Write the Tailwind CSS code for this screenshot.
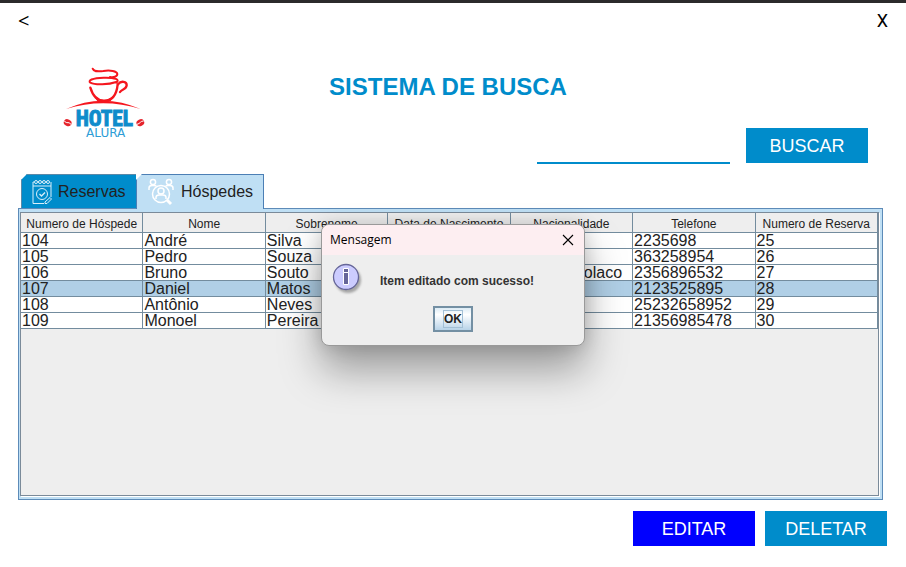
<!DOCTYPE html>
<html lang="pt-BR">
<head>
<meta charset="utf-8">
<meta name="viewport" content="width=device-width, initial-scale=1">
<title>Sistema de Busca - Hotel Alura</title>
<script src="https://cdn.jsdelivr.net/npm/@tailwindcss/browser@4"></script>
</head>
<body class="min-h-screen flex flex-col bg-white border-t-3 border-[#2b2a2b] font-['Liberation_Sans',Arial,sans-serif] text-[#222]">
  <header class="flex justify-between px-4 pt-2 text-lg leading-5 text-black">
    <button type="button" aria-label="Voltar" class="px-0.5 font-['Open_Sans','Noto_Sans',sans-serif] text-xl leading-5">&lt;</button>
    <button type="button" aria-label="Fechar" class="px-0.5 font-['Roboto',sans-serif]">X</button>
  </header>

  <section class="flex flex-col h-[143px] pl-[50px] pr-[38px] pt-6">
    <div class="grid grid-cols-[1fr_auto_1fr]">
      <svg class="w-[110px] h-[95px]" viewBox="0 0 330 285" role="img" aria-label="Hotel Alura">
        <g fill="none" stroke="#f5161e" stroke-linecap="round">
          <path d="M128 41C132 52 145 49 160 48C180 45 201 48 202 57C202 65 190 68 180 66" stroke-width="6"/>
          <path d="M199 83C211 74 196 67 161 68C126 69 113 77 121 83C136 91 176 89 199 81" stroke-width="6"/>
          <path d="M121 98C127 118 137 137 162 138C188 137 200 119 203 88" stroke-width="7"/>
          <path d="M204 88C213 76 231 79 230 91C228 105 216 101 210 111" stroke-width="7"/>
        </g>
        <path d="M132 122Q162 146 190 122L182 139H142Z" fill="#f5161e"/>
        <path d="M48 162Q158 112 272 162Q159 127 48 162Z" fill="#f5161e"/>
        <g fill="#e5242c">
          <ellipse cx="53" cy="203" rx="12" ry="10" transform="rotate(25 53 203)"/>
          <ellipse cx="271" cy="203" rx="12" ry="10" transform="rotate(-25 271 203)"/>
        </g>
        <path d="M43 199Q52 205 54 203T63 208M261 208Q268 206 271 202T281 198" fill="none" stroke="#fff" stroke-width="3"/>
        <text x="163" y="212" text-anchor="middle" font-family="'Liberation Sans Narrow','Roboto Condensed','Liberation Sans',sans-serif" font-weight="700" font-size="64" fill="#0e8ccb" stroke="#0e8ccb" stroke-width="3">HOTEL</text>
        <text x="167" y="247" text-anchor="middle" font-family="'DejaVu Sans',sans-serif" font-size="36" fill="#2d9dd6">ALURA</text>
      </svg>
      <h1 class="-ml-[22px] pt-4 text-2xl leading-8 font-bold text-[#008ccb]">SISTEMA DE BUSCA</h1>
    </div>
    <form class="-mt-[22px] flex justify-end gap-4">
      <input type="text" aria-label="Buscar" class="w-[193px] h-9 border-b-2 border-[#008ccb] outline-none">
      <button type="button" class="w-[122px] h-[35px] bg-[#008ccb] text-lg text-white">BUSCAR</button>
    </form>
  </section>

  <main class="flex-1 flex flex-col ml-[18px] mr-[23px]">
    <div role="tablist" class="flex pl-[3px] -mb-px relative">
      <button type="button" role="tab" aria-selected="false" class="flex items-center gap-1 h-[34px] w-[115px] pl-2 bg-[#008ccb] border-t border-l border-[#5b89a8] [clip-path:polygon(6px_0,100%_0,100%_100%,0_100%,0_6px)]">
        <svg class="w-6 h-[26px]" viewBox="0 0 24 26" fill="none" stroke="#d9effa" stroke-width="1">
          <path d="M4 3H3V24.500H14M21 3V18M3 7H21"/>
          <g><circle cx="6" cy="3" r="1.500"/><circle cx="10" cy="3" r="1.500"/><circle cx="14" cy="3" r="1.500"/><circle cx="18" cy="3" r="1.500"/><path d="M8 3h1M12 3h1M16 3h1"/></g>
          <circle cx="12" cy="15" r="5.500"/>
          <path d="M9.500 15L11.500 17L15 13.500" stroke-width="1.300"/><path d="M15 23L20 18.500L21.500 20L17 24.500H15Z"/>
        </svg>
        <span>Reservas</span>
      </button>
      <button type="button" role="tab" aria-selected="true" class="flex items-center gap-1 h-[35px] w-[128px] pl-2.5 bg-[#bfdff4] border-t border-x border-[#4c7fb5] [clip-path:polygon(6px_0,100%_0,100%_100%,0_100%,0_6px)]">
        <svg class="w-[30px] h-[30px] shrink-0" viewBox="0 0 30 30" fill="none" stroke="#fff" stroke-width="1.500">
          <circle cx="6" cy="5" r="2.600"/><path d="M2 13V11Q2 8.500 5 8.500H7Q9 8.500 9.500 9.500"/>
          <circle cx="22" cy="5" r="2.600"/><path d="M26 13V11Q26 8.500 23 8.500H21Q19 8.500 18.500 9.500"/>
          <circle cx="14" cy="17" r="8.500"/><circle cx="14" cy="14" r="3"/>
          <path d="M9 22V20.500Q9 18 12 18H16Q19 18 19 20.500V22"/>
          <path d="M20 23L24 27" stroke-width="3"/>
        </svg>
        <span>Hóspedes</span>
      </button>
    </div>
    <div role="tabpanel" class="flex-1 flex border border-[#5d8bb8] bg-[#bfdff4] pt-[3px] pb-[3px] pl-px pr-[3px]">
      <div class="flex-1 bg-[#eee] border border-[#7a8a99] shadow-[1px_1px_0_#fff]">
        <table class="w-full table-fixed border-separate border-spacing-0">
          <thead>
            <tr class="h-5 text-xs leading-4 whitespace-nowrap [&>th]:font-normal [&>th]:p-0 [&>th]:pt-0.5 [&>th]:border-r [&>th]:border-b [&>th]:border-[#738c9e]">
              <th>Numero de Hóspede</th><th>Nome</th><th>Sobrenome</th><th>Data de Nascimento</th><th>Nacionalidade</th><th>Telefone</th><th>Numero de Reserva</th>
            </tr>
          </thead>
          <tbody class="bg-white text-base leading-[14px] whitespace-nowrap [&_td]:h-4 [&_td]:p-0 [&_td]:pt-px [&_td]:pl-px [&_td]:border-r [&_td]:border-b [&_td]:border-[#738c9e]">
            <tr><td>104</td><td>André</td><td>Silva</td><td></td><td></td><td>2235698</td><td>25</td></tr>
            <tr><td>105</td><td>Pedro</td><td>Souza</td><td></td><td></td><td>363258954</td><td>26</td></tr>
            <tr><td>106</td><td>Bruno</td><td>Souto</td><td></td><td class="text-right"><span class="pr-2.5">olaco</span></td><td>2356896532</td><td>27</td></tr>
            <tr class="bg-[#b0cfe6]"><td>107</td><td>Daniel</td><td>Matos</td><td></td><td></td><td>2123525895</td><td>28</td></tr>
            <tr><td>108</td><td>Antônio</td><td>Neves</td><td></td><td></td><td>25232658952</td><td>29</td></tr>
            <tr><td>109</td><td>Monoel</td><td>Pereira</td><td></td><td></td><td>21356985478</td><td>30</td></tr>
          </tbody>
        </table>
      </div>
    </div>
  </main>

  <footer class="flex justify-end gap-2.5 pt-[11px] pb-[21px] pr-[19px] text-lg text-white">
    <button type="button" class="w-[122px] h-[35px] bg-[#0000ff]">EDITAR</button>
    <button type="button" class="w-[122px] h-[35px] bg-[#008ccb]">DELETAR</button>
  </footer>

  <div role="dialog" aria-labelledby="dialog-title" class="absolute left-1/2 top-[224px] -translate-x-1/2 w-[264px] rounded-lg border border-[#999] bg-[#eee] shadow-[0_24px_40px_rgba(0,0,0,0.35),0_0_18px_rgba(0,0,0,0.15)] overflow-hidden">
    <div class="flex items-center justify-between h-[30px] pl-2 pr-2.5 bg-[#fdeef1] text-black">
      <h2 id="dialog-title" class="font-['Open_Sans','Noto_Sans',sans-serif] text-xs">Mensagem</h2>
      <button type="button" aria-label="Fechar mensagem"><svg class="size-3" viewBox="0 0 12 12" fill="none" stroke="#000" stroke-width="1.100"><path d="M1 1L11 11M11 1L1 11"/></svg></button>
    </div>
    <div class="flex gap-4 pt-2 pl-2.5">
      <svg class="size-8 shrink-0" viewBox="0 0 32 32">
        <defs><filter id="soft" x="-20%" y="-20%" width="150%" height="150%"><feGaussianBlur stdDeviation="1.300"/></filter></defs>
        <circle cx="16" cy="17" r="13" fill="#888" opacity=".7" filter="url(#soft)"/>
        <circle cx="14" cy="14" r="12.500" fill="#ccccff" stroke="#666699" stroke-width="1.300"/>
        <path d="M11.500 5.500h5v4h-5zM11.500 9.500h5v12h-5z" fill="#666699" stroke="#fff"/>
      </svg>
      <p class="pt-2.5 text-xs leading-4 font-bold text-[#333]">Item editado com sucesso!</p>
    </div>
    <div class="flex justify-center pt-[11px] pb-[13px]">
      <button type="button" class="h-[26px] px-2 border-2 border-[#738fa3] bg-linear-to-b from-[#dcebf5] via-white via-30% to-[#b8d3e8] text-xs leading-4 font-bold"><span class="block border border-[#a3c0d6]">OK</span></button>
    </div>
  </div>
</body>
</html>
